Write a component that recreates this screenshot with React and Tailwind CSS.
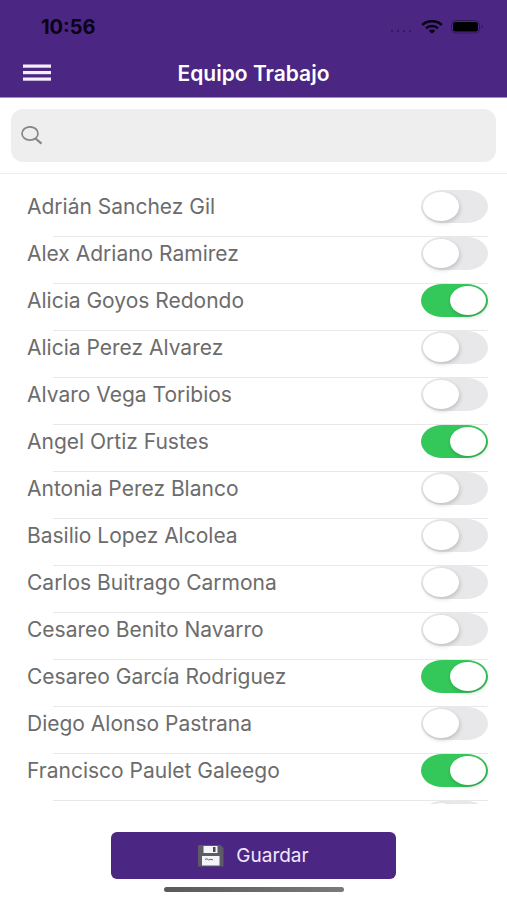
import React, { useState } from "react";

const initialTeam = [
  { id: 1, name: "Adrián Sanchez Gil", selected: false },
  { id: 2, name: "Alex Adriano Ramirez", selected: false },
  { id: 3, name: "Alicia Goyos Redondo", selected: true },
  { id: 4, name: "Alicia Perez Alvarez", selected: false },
  { id: 5, name: "Alvaro Vega Toribios", selected: false },
  { id: 6, name: "Angel Ortiz Fustes", selected: true },
  { id: 7, name: "Antonia Perez Blanco", selected: false },
  { id: 8, name: "Basilio Lopez Alcolea", selected: false },
  { id: 9, name: "Carlos Buitrago Carmona", selected: false },
  { id: 10, name: "Cesareo Benito Navarro", selected: false },
  { id: 11, name: "Cesareo García Rodriguez", selected: true },
  { id: 12, name: "Diego Alonso Pastrana", selected: false },
  { id: 13, name: "Francisco Paulet Galeego", selected: true },
  { id: 14, name: "", selected: false },
];

const StatusIcons = () => (
  <div className="flex items-center">
    <svg width="24" height="14" viewBox="0 0 24 14" fill="#2b1458" aria-hidden="true">
      <circle cx="3" cy="11" r="1" />
      <circle cx="9" cy="11" r="1" />
      <circle cx="15" cy="11" r="1" />
      <circle cx="21" cy="11" r="1" />
    </svg>
    <svg
      className="ml-2"
      width="22"
      height="14"
      viewBox="0 0 22 14"
      fill="none"
      stroke="#0a0316"
      strokeWidth="2.6"
      aria-hidden="true"
    >
      <path d="M1.2 4.9C6.6-.1 15.4-.1 20.8 4.9" />
      <path d="M4.9 8.3c3.5-3 8.7-3 12.2 0" />
      <path d="M7.6 10.8c2-1.6 4.8-1.6 6.8 0L11 13.6z" fill="#0a0316" stroke="none" />
    </svg>
    <svg className="ml-2" width="33" height="14" viewBox="0 0 33 14" aria-hidden="true">
      <rect x="0.5" y="0.5" width="28" height="12.5" rx="4" fill="none" stroke="#33185f" />
      <rect x="2" y="2" width="25" height="9.5" rx="2.5" fill="#000" />
      <path d="M30.5 5c1.6.6 1.6 3 0 3.6z" fill="#2b1458" />
    </svg>
  </div>
);

const FloppyIcon = () => (
  <svg width="26" height="22" viewBox="0 0 26 22" aria-hidden="true">
    <path d="M1 0h21.5l3 3v18.5H0V1z" fill="#5d5b66" />
    <path d="M5.5 1h14v7h-14z" fill="#f4f3f8" />
    <path d="M15 2h2.5v5H15z" fill="#4a4854" />
    <path d="M4 11h17.5v9.5H4z" fill="#f4f3f8" />
    <path d="M7 14.5l2-.8 1.5 1.3 1.5-.7 3 .5" fill="none" stroke="#66646f" />
  </svg>
);

const TeamRow = ({ member, onToggle }) => (
  <li className="h-[47px] shrink-0">
    <label className="flex h-[33px] items-center justify-between pl-[27px] pr-[19px]">
      <span className="pt-px text-[21px] leading-6 text-[#6c6c6c]">{member.name}</span>
      <input
        type="checkbox"
        role="switch"
        aria-label={member.name || "Miembro"}
        checked={member.selected}
        onChange={() => onToggle(member.id)}
        className="h-[33px] w-[67px] shrink-0 appearance-none rounded-[22px/17px] bg-[#e8e8ea] p-[2px] before:block before:h-[29px] before:w-[36px] before:rounded-[50%] before:bg-white before:shadow-[1px_2px_4px_rgba(0,0,0,0.18)] checked:bg-[#34c759] checked:before:translate-x-[27px]"
      />
    </label>
    <div className="mt-[13px] ml-[53px] mr-[19px] h-px bg-[#e8e8e8]" />
  </li>
);

const App = () => {
  const [team, setTeam] = useState(initialTeam);
  const [search, setSearch] = useState("");

  const toggleMember = (id) => {
    setTeam(team.map((m) => (m.id === id ? { ...m, selected: !m.selected } : m)));
  };

  const visible = team.filter((m) =>
    m.name.toLowerCase().includes(search.toLowerCase())
  );

  return (
    <div className="flex h-screen flex-col bg-white font-['Inter',sans-serif]">
      <header className="border-b border-[#a48fc4] bg-[#4b2683] text-white">
        {/* Status bar */}
        <div className="flex h-[54px] items-center justify-between pl-[41px] pr-[23px]">
          <span className="text-xl font-bold leading-6 text-[#0a0316]">10:56</span>
          <StatusIcons />
        </div>
        <div className="grid h-[43px] grid-cols-[1fr_auto_1fr] items-start">
          <button type="button" aria-label="Menú" className="ml-[23px] w-7 pt-2.5">
            <svg width="28" height="17" viewBox="0 0 28 17" fill="#f5effc">
              <rect y="0.5" width="28" height="3.2" />
              <rect y="7" width="28" height="3.2" />
              <rect y="13.5" width="28" height="3.2" />
            </svg>
          </button>
          <h1 className="pt-2 text-[21px] font-semibold leading-6">Equipo Trabajo</h1>
        </div>
      </header>

      {/* Search */}
      <div className="border-b border-[#ececec] p-[11px]">
        <label className="flex h-[53px] items-center gap-2 rounded-xl bg-[#eeeeee] px-[10px]">
          <svg
            width="22"
            height="19"
            viewBox="0 0 22 19"
            fill="none"
            stroke="#868686"
            aria-hidden="true"
          >
            <ellipse cx="9" cy="7.5" rx="8" ry="6.7" strokeWidth="1.7" />
            <path d="M14.5 12.5l6 5.2" strokeWidth="2.2" />
          </svg>
          <input
            type="text"
            aria-label="Buscar"
            className="h-full min-w-0 flex-1 bg-transparent text-[21px] text-[#6c6c6c] outline-none"
            value={search}
            onChange={(e) => setSearch(e.target.value)}
          />
        </label>
      </div>

      <ul className="flex min-h-0 flex-1 flex-col overflow-y-auto pt-4 [scrollbar-width:none]">
        {visible.map((member) => (
          <TeamRow key={member.id} member={member} onToggle={toggleMember} />
        ))}
      </ul>

      {/* Save */}
      <footer className="flex flex-col items-center px-4 pt-7 pb-2">
        <button
          type="button"
          className="flex h-[47px] w-3/5 items-center justify-center gap-3 rounded-md bg-[#4b2683] text-[19px] leading-6 text-[#f1e6fb]"
        >
          <FloppyIcon />
          Guardar
        </button>
        <div className="mt-2 h-[5px] w-[180px] rounded-full bg-linear-to-r from-[#5a5a5a] to-[#7a7a7a]" />
      </footer>
    </div>
  );
};

export default App;
